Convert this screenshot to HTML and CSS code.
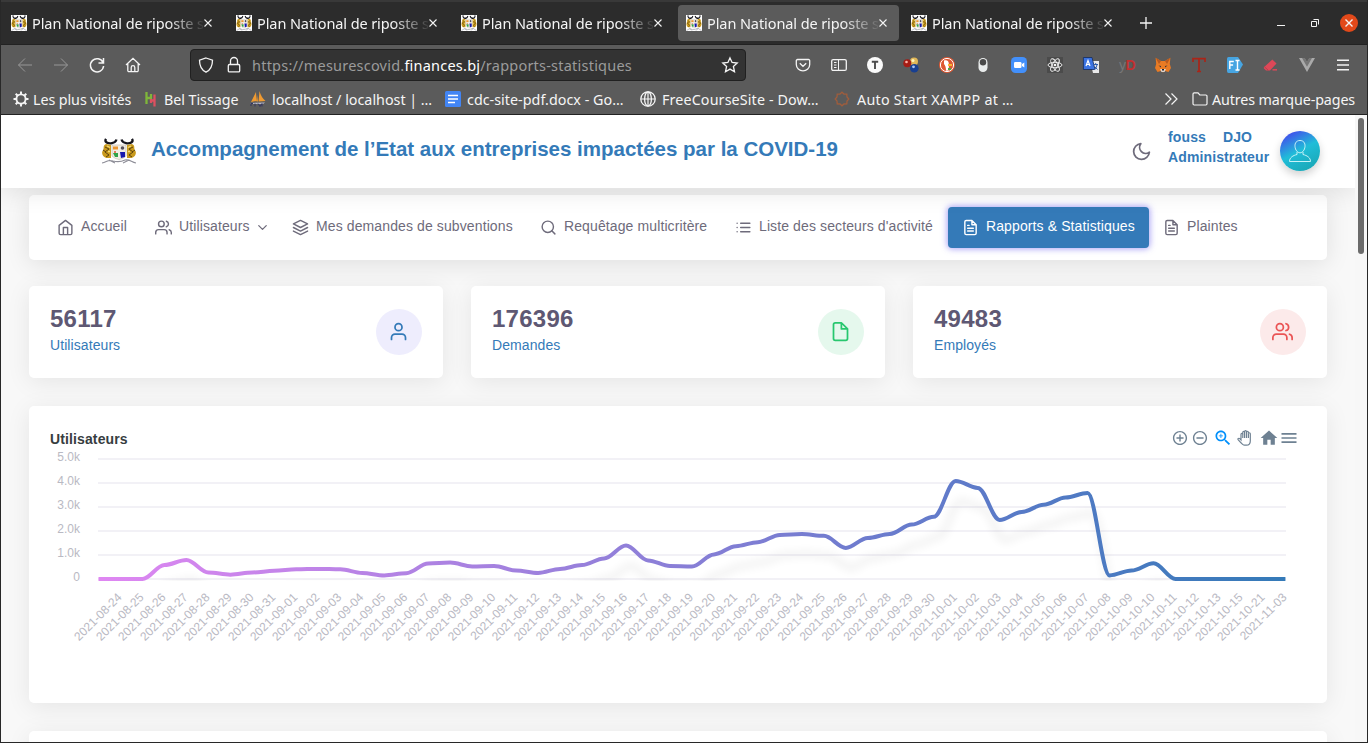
FILE: index.html
```html
<!DOCTYPE html>
<html lang="fr">
<head>
<meta charset="utf-8">
<title>Rapports &amp; Statistiques</title>
<link rel="stylesheet" href="styles.css">
</head>
<body>
<svg class="defs" aria-hidden="true">
  <symbol id="arms" viewBox="0 0 36 26" preserveAspectRatio="none">
    <path d="M5 .8C3 4 7 6 11 5.2C14 4.6 15 3 15.500 1.500M31 .8C33 4 29 6 25 5.200C22 4.600 21 3 20.500 1.500" fill="none" stroke="#15151d" stroke-width="2.300"/>
    <path d="M5 6C1 8 4 10 1.500 13C0 16 3 20 6 20L10 20L10 7ZM31 6C35 8 32 10 34.500 13C36 16 33 20 30 20L26 20L26 7Z" fill="#c99a1d"/>
    <path d="M4 9L8 11L4 14L8 17L5 19M32 9L28 11L32 14L28 17L31 19M2 12l3 2M34 12l-3 2" fill="none" stroke="#5c430f" stroke-width="1"/>
    <path d="M6 8L9 9.500M7 13.500h2M30 8L27 9.500M29 13.500h-2" stroke="#f4dc75" stroke-width="1.300"/>
    <path d="M11 7H25V18Q22 21 18 21.500Q14 21 11 18Z" fill="#f1eee5" stroke="#bdb4a4" stroke-width=".6"/>
    <path d="M12 8.500h5v3h-5z" fill="#eb9632"/><path d="M12 15h5v4h-3z" fill="#30a34a"/><path d="M19 14h5v5l-4 1z" fill="#1719ae"/><circle cx="21.500" cy="10" r="1.800" fill="#55505a"/><circle cx="14" cy="14" r="1" fill="#e15331"/>
    <path d="M1 25C6 24 7 21 12 23C16 24 20 24 24 22C29 21 30 24 35 25M8 22L14 25M28 22L22 25" fill="none" stroke="#8e8e98" stroke-width="1.100"/>
  </symbol>
  <symbol id="close" viewBox="0 0 10 10"><path d="M1.500 1.500l7 7M8.500 1.500l-7 7"/></symbol>
  <symbol id="users" viewBox="0 0 24 24"><path d="M17 21v-2a4 4 0 0 0-4-4H5a4 4 0 0 0-4 4v2M23 21v-2a4 4 0 0 0-3-3.870M16 3.130a4 4 0 0 1 0 7.750"/><circle cx="9" cy="7" r="4"/></symbol>
  <symbol id="filetext" viewBox="0 0 24 24"><path d="M14 2H6a2 2 0 0 0-2 2v16a2 2 0 0 0 2 2h12a2 2 0 0 0 2-2V8zM14 2v6h6M16 13H8M16 17H8M10 9H8"/></symbol>
</svg>
<div class="window">
  <div class="tabbar">
    <div class="tab"><svg class="favicon"><use href="#arms"/></svg><span class="tab-title">Plan National de riposte s</span><svg class="ic tab-close"><use href="#close"/></svg></div>
    <div class="tab"><svg class="favicon"><use href="#arms"/></svg><span class="tab-title">Plan National de riposte s</span><svg class="ic tab-close"><use href="#close"/></svg></div>
    <div class="tab"><svg class="favicon"><use href="#arms"/></svg><span class="tab-title">Plan National de riposte s</span><svg class="ic tab-close"><use href="#close"/></svg></div>
    <div class="tab active"><svg class="favicon"><use href="#arms"/></svg><span class="tab-title">Plan National de riposte s</span><svg class="ic tab-close"><use href="#close"/></svg></div>
    <div class="tab"><svg class="favicon"><use href="#arms"/></svg><span class="tab-title">Plan National de riposte s</span><svg class="ic tab-close"><use href="#close"/></svg></div>
    <svg class="ic newtab" viewBox="0 0 14 14"><path d="M7 1v12M1 7h12"/></svg>
    <div class="winctl">
      <svg class="ic" width="8" height="8" viewBox="0 0 8 8"><path d="M0 6.500h8"/></svg>
      <svg class="ic" width="8" height="8" viewBox="0 0 8 8"><path d="M.5 2.500h5v5h-5zM2.500 .5h5v5" /></svg>
      <svg class="ic" width="18" height="18" viewBox="0 0 18 18"><circle cx="9" cy="9" r="9" fill="#e2491a" stroke="none"/><path d="M5.500 5.500l7 7M12.500 5.500l-7 7" stroke-width="1.400"/></svg>
    </div>
  </div>

  <div class="toolbar">
    <div class="navbtns">
      <svg class="ic dim" viewBox="0 0 16 16"><path d="M15 8H1.500M8 1.500L1.500 8L8 14.500"/></svg>
      <svg class="ic dim" viewBox="0 0 16 16"><path d="M1 8h13.500M8 1.500L14.500 8L8 14.500"/></svg>
      <svg class="ic" viewBox="0 0 16 16"><path d="M14 5.500A6.600 6.600 0 1 0 14.600 9M14.500 1v5h-5" stroke-width="1.500"/></svg>
      <svg class="ic" viewBox="0 0 16 16"><path d="M1 8L8 1.300L15 8M2.800 6.800V13.500a1.200 1.200 0 0 0 1.200 1.200h8a1.200 1.200 0 0 0 1.200-1.200V6.800M6.200 14.500V10.500a1.800 1.800 0 0 1 3.600 0V14.500" stroke-width="1.300"/></svg>
    </div>
    <div class="urlbar">
      <svg class="ic" viewBox="0 0 16 16"><path d="M8 1L14.500 3.200C14.500 9 12.500 13 8 15.200C3.500 13 1.500 9 1.500 3.200Z" stroke-width="1.300"/></svg>
      <svg class="ic" viewBox="0 0 16 16"><path d="M3.500 7.500h9a1.200 1.200 0 0 1 1.200 1.200v5a1.200 1.200 0 0 1-1.200 1.200h-9a1.200 1.200 0 0 1-1.200-1.200v-5a1.200 1.200 0 0 1 1.200-1.200zM4.500 7.500V4a3.500 3.500 0 0 1 7 0V7.500" stroke-width="1.300"/></svg>
      <span class="url">https://mesurescovid.<b>finances.bj</b>/rapports-statistiques</span>
      <svg class="ic star" viewBox="0 0 16 16"><path d="M8 .9L10.100 5.500L15.200 6.100L11.400 9.500L12.500 14.700L8 12.100L3.500 14.700L4.600 9.500L.8 6.100L5.900 5.500Z" stroke-width="1.300"/></svg>
    </div>
    <div class="exts">
      <svg class="ic" viewBox="0 0 16 16"><path d="M2.500 2.500h11a1.200 1.200 0 0 1 1.200 1.200V7.500a6.700 6.300 0 0 1-13.400 0V3.700a1.200 1.200 0 0 1 1.200-1.200zM4.800 6.300L8 9.300L11.200 6.300" stroke-width="1.300"/></svg>
      <svg class="ic" viewBox="0 0 16 16"><rect x=".7" y="2.600" width="14.600" height="10.800" rx="1.500" stroke-width="1.300"/><path d="M7.500 2.600v10.800M3 5.500h2.500M3 8h2.500M3 10.500h2.500"/></svg>
      <svg viewBox="0 0 16 16"><circle cx="8" cy="8" r="8" fill="#fafafa"/><path d="M4.800 4.700h6.400M8 4.700V12" stroke="#4c4c4c" stroke-width="1.900"/></svg>
      <svg viewBox="0 0 16 16"><circle cx="11" cy="4.500" r="4" fill="#e0b758"/><circle cx="10" cy="3.500" r="1.500" fill="#fff3bb"/><circle cx="4.300" cy="6.300" r="4" fill="#a51c15"/><circle cx="3.500" cy="5" r="1.300" fill="#ffb4a8"/><circle cx="11.300" cy="11.300" r="4.300" fill="#183f91"/><circle cx="10.500" cy="9.800" r="1.400" fill="#a8c6f6"/></svg>
      <svg viewBox="0 0 16 16"><circle cx="8" cy="8" r="8" fill="#de5833"/><circle cx="8" cy="8" r="6.600" fill="none" stroke="#fff"/><path d="M5 3.500C8 2.500 10 4 9.800 7L9.800 13.500L7 13.800Q7 9 5 7z" fill="#fff"/><path d="M9 7h4v2H9z" fill="#f8b72f"/><path d="M9 11h3v2H9z" fill="#4ca749"/></svg>
      <svg viewBox="0 0 16 16"><rect x="3.500" y="1" width="9" height="14" rx="4.500" fill="#e9ecec"/><circle cx="8" cy="5.300" r="3.200" fill="#494949"/></svg>
      <svg viewBox="0 0 16 16"><rect width="16" height="16" rx="4.500" fill="#4390fb"/><rect x="3" y="5" width="7.500" height="6" rx="1.300" fill="#fff"/><path d="M11 7l2.300-1.500v5L11 9z" fill="#fff"/></svg>
      <svg viewBox="0 0 16 16"><path fill="#4b4b4b" d="M0 0h16v16H0z"/><g fill="none" stroke="#f5f5f5" stroke-width=".9"><ellipse cx="8" cy="8" rx="7" ry="2.700"/><ellipse cx="8" cy="8" rx="7" ry="2.700" transform="rotate(60 8 8)"/><ellipse cx="8" cy="8" rx="7" ry="2.700" transform="rotate(120 8 8)"/></g><circle cx="8" cy="8" r="1.300" fill="#f5f5f5"/></svg>
      <svg viewBox="0 0 16 16"><path fill="#e9e9ea" d="M7 4h9v12H10z"/><path fill="#3b73e2" stroke="#142b5d" stroke-width=".8" d="M.4.5H9l3 12H.4z"/><path d="M3 9l2-5.500L7 9M3.700 7.500h2.800" stroke="#fff" stroke-width="1.200" fill="none"/><path d="M10.500 7.500h4.500M12.700 6v1.500M14 8q-1 4-3 5M11.500 9.500l3 3" stroke="#2e5dad" fill="none"/></svg>
      <span class="yd">y<b>D</b></span>
      <svg viewBox="0 0 16 16"><path d="M.6.8L6 4h4L15.400.8L14.800 7L16 11L13.500 15L10 14L8 15.500L6 14L2.500 15L0 11L1.200 7z" fill="#e97b24"/><path d="M.6.8L6 4L4 7zM15.400.8L10 4l2 3z" fill="#b75a21"/><path d="M3.500 8.500L6 9v1.500zM12.500 8.500L10 9v1.500z" fill="#33303b"/><path d="M5 12h6l-1.500 3h-3z" fill="#ddd4cc"/><path d="M7 12h2v1.500H7z" fill="#26222a"/></svg>
      <svg viewBox="0 0 16 16"><path d="M2 5V1.700h12V5M8 1.500V14.500M6 14.500h4" fill="none" stroke="#aa2518" stroke-width="1.700"/></svg>
      <svg viewBox="0 0 16 16"><path d="M1.500 0H11L16 7.500L11 16H1.500Q0 16 0 14V2Q0 0 1.500 0z" fill="#47a5e2"/><path d="M2.800 12V4.500h4M2.800 8h3.300M8.500 3.500h4M8.500 13h4M10.500 3.500V13" fill="none" stroke="#fff" stroke-width="1.400"/></svg>
      <svg viewBox="0 0 16 16"><path d="M9.300 2.500L13.500 6.500L7 13.500H3L1 11.500Q.5 11 1 10.300z" fill="#dd4858"/><path d="M1.500 9.800l4 3.700" stroke="#b83f4c"/><path d="M9.500 12.800h4.500" stroke="#dd4858" stroke-width="1.500"/></svg>
      <svg viewBox="0 0 16 16"><path d="M0 1h5.500L8 5.300L10.500 1H16L8 15z" fill="#aaa"/><path d="M3 1h2.800L8 4.800L10.200 1H13L8 9.800z" fill="#777"/></svg>
      <svg class="ic" viewBox="0 0 16 16"><path d="M2 3.200h12M2 8h12M2 12.800h12" stroke-width="1.400"/></svg>
    </div>
  </div>

  <div class="bookmarks">
    <div class="bm"><svg class="ic" viewBox="0 0 16 16"><circle cx="8" cy="8" r="4.600" stroke-width="1.900"/><path d="M8 .5v2.500M8 13v2.500M.5 8H3M13 8h2.500M2.700 2.700l1.800 1.800M11.500 11.500l1.800 1.800M2.700 13.300l1.800-1.800M11.500 4.500l1.800-1.800" stroke-width="2"/></svg><span class="t1">Les plus visités</span></div>
    <div class="bm"><svg viewBox="0 0 16 16"><path d="M3.500 1v12M3.500 7H8M8 3v5" stroke="#7fb63b" stroke-width="2.300" fill="none"/><path d="M7 9.500h4.500M11.500 3.500v12M8 8v4" stroke="#db5160" stroke-width="2.300" fill="none"/></svg><span class="t2">Bel Tissage</span></div>
    <div class="bm"><svg viewBox="0 0 16 16"><path d="M6 1L6.500 10L1 11zM9.500 0Q11 6 15.500 10L8.500 10.500zM7 3.500L8 10.500H6.500z" fill="#ef9a31"/><path d="M0 12l15-.6l-2 1.600H2z" fill="#b8b8c6"/><path d="M1 15v-2.500h2M5 12.500v3M8 12.500l2 3l2-3v3" stroke="#34345f" stroke-width="1" fill="none"/></svg><span class="t3">localhost / localhost | …</span></div>
    <div class="bm"><svg viewBox="0 0 16 16"><rect width="16" height="16" rx="1.500" fill="#4285f4"/><path d="M3 4.500h10M3 8h10M3 11.500h7" stroke="#fff" stroke-width="1.700"/></svg><span class="t4">cdc-site-pdf.docx - Go…</span></div>
    <div class="bm"><svg class="ic" viewBox="0 0 16 16"><circle cx="8" cy="8" r="7.200" stroke-width="1.300"/><ellipse cx="8" cy="8" rx="3.400" ry="7.200" stroke-width="1.300"/><path d="M1 8h14M8 1v14" stroke-width="1.200"/></svg><span class="t5">FreeCourseSite - Dow…</span></div>
    <div class="bm"><svg viewBox="0 0 16 16"><path d="M8 1.200L10 3L12.800 3.200L13 6L14.800 8L13 10L12.800 12.800L10 13L8 14.800L6 13L3.200 12.800L3 10L1.200 8L3 6L3.200 3.200L6 3z" fill="none" stroke="#a05d3c" stroke-width="1.300"/></svg><span class="t6">Auto Start XAMPP at …</span></div>
    <svg class="ic more" viewBox="0 0 14 14"><path d="M1.500 1.500L7 7L1.500 12.500M7.500 1.500L13 7L7.500 12.500" stroke-width="1.200"/></svg>
    <div class="bm"><svg class="ic" viewBox="0 0 16 16"><path d="M1 3a1.200 1.200 0 0 1 1.200-1.200H6L7.800 4H13.800A1.200 1.200 0 0 1 15 5.200V12.800A1.200 1.200 0 0 1 13.800 14H2.200A1.200 1.200 0 0 1 1 12.800z" stroke-width="1.200"/></svg><span class="t7">Autres marque-pages</span></div>
  </div>

  <div class="viewport">
    <div class="page">
      <header class="header">
        <svg class="logo"><use href="#arms"/></svg>
        <h1 class="brand">Accompagnement de l’Etat aux entreprises impactées par la COVID-19</h1>
        <svg class="ft moon" viewBox="0 0 24 24"><path d="M21 12.790A9 9 0 1 1 11.210 3 7 7 0 0 0 21 12.790z"/></svg>
        <div class="who"><span class="names"><span>fouss</span><span>DJO</span></span><span class="role">Administrateur</span></div>
        <svg class="avatar" viewBox="0 0 40 40"><defs><linearGradient id="av" x1=".2" y1="0" x2=".75" y2="1"><stop offset="0" stop-color="#4444ee"/><stop offset=".5" stop-color="#20bdd8"/><stop offset="1" stop-color="#1aa7b5"/></linearGradient></defs><circle cx="20" cy="20" r="20" fill="url(#av)"/><path d="M20 9.500c3.500 0 5.300 2.500 5 6c-.3 3.500-2.500 6.300-5 6.300s-4.700-2.800-5-6.300c-.3-3.500 1.500-6 5-6zM17 21v2.500c-4 1-7.500 3-7.500 7h21c0-4-3.500-6-7.500-7V21" fill="none" stroke="#c9f3f8" stroke-width="1"/></svg>
      </header>

      <nav class="menu">
        <a class="m1"><svg class="ft" viewBox="0 0 24 24"><path d="M3 9l9-7 9 7v11a2 2 0 0 1-2 2H5a2 2 0 0 1-2-2zM9 22V12h6v10"/></svg>Accueil</a>
        <a class="m2"><svg class="ft"><use href="#users"/></svg>Utilisateurs<svg class="ft chev" viewBox="0 0 24 24"><path d="M6 9l6 6 6-6"/></svg></a>
        <a class="m3"><svg class="ft" viewBox="0 0 24 24"><path d="M12 2L2 7l10 5 10-5-10-5zM2 17l10 5 10-5M2 12l10 5 10-5"/></svg>Mes demandes de subventions</a>
        <a class="m4"><svg class="ft" viewBox="0 0 24 24"><circle cx="11" cy="11" r="8"/><path d="M21 21l-4.350-4.350"/></svg>Requêtage multicritère</a>
        <a class="m5"><svg class="ft" viewBox="0 0 24 24"><path d="M8 6h13M8 12h13M8 18h13M3 6h.01M3 12h.01M3 18h.01"/></svg>Liste des secteurs d'activité</a>
        <a class="m6"><svg class="ft"><use href="#filetext"/></svg>Rapports &amp; Statistiques</a>
        <a class="m7"><svg class="ft"><use href="#filetext"/></svg>Plaintes</a>
      </nav>

      <section class="stats">
        <article class="card stat"><div><h2>56117</h2><p>Utilisateurs</p></div><span class="disc blue"><svg class="ft" viewBox="0 0 24 24"><path d="M20 21v-2a4 4 0 0 0-4-4H8a4 4 0 0 0-4 4v2"/><circle cx="12" cy="7" r="4"/></svg></span></article>
        <article class="card stat"><div><h2>176396</h2><p>Demandes</p></div><span class="disc green"><svg class="ft" viewBox="0 0 24 24"><path d="M13 2H6a2 2 0 0 0-2 2v16a2 2 0 0 0 2 2h12a2 2 0 0 0 2-2V9zM13 2v7h7"/></svg></span></article>
        <article class="card stat"><div><h2>49483</h2><p>Employés</p></div><span class="disc red"><svg class="ft"><use href="#users"/></svg></span></article>
      </section>

      <section class="card chart">
        <div class="chart-head">
          <h3>Utilisateurs</h3>
          <div class="tools">
            <svg width="20" height="20" viewBox="0 0 24 24"><path d="M13 7h-2v4H7v2h4v4h2v-4h4v-2h-4V7zm-1-5C6.480 2 2 6.480 2 12s4.480 10 10 10 10-4.480 10-10S17.520 2 12 2zm0 18c-4.410 0-8-3.590-8-8s3.590-8 8-8 8 3.590 8 8-3.590 8-8 8z" transform="translate(1.800 1.800) scale(.85)"/></svg>
            <svg width="20" height="20" viewBox="0 0 24 24"><path d="M7 11v2h10v-2H7zm5-9C6.480 2 2 6.480 2 12s4.480 10 10 10 10-4.480 10-10S17.520 2 12 2zm0 18c-4.410 0-8-3.590-8-8s3.590-8 8-8 8 3.590 8 8-3.590 8-8 8z" transform="translate(1.800 1.800) scale(.85)"/></svg>
            <svg class="on" width="20" height="20" viewBox="0 0 24 24"><path d="M15.500 14h-.79l-.28-.27C15.410 12.590 16 11.110 16 9.500 16 5.910 13.090 3 9.500 3S3 5.910 3 9.500 5.910 16 9.500 16c1.610 0 3.090-.59 4.230-1.570l.27.28v.79l5 4.990L20.490 19l-4.990-5zm-6 0C7.010 14 5 11.990 5 9.500S7.010 5 9.500 5 14 7.010 14 9.500 11.990 14 9.500 14zM12 10h-2v2H9v-2H7V9h2V7h1v2h2v1z"/></svg>
            <svg class="hand" width="16" height="16" viewBox="0 0 16 16"><path d="M4 10V4.200a.9.900 0 0 1 1.800 0V2.200a.9.900 0 0 1 1.800 0V1.600a.9.900 0 0 1 1.900 0v.6a.9.900 0 0 1 1.900 0v1.500a.9.900 0 0 1 1.900 0V11c0 2.500-1.300 4.200-3.800 4.200H7.500c-2 0-4-3-6.400-5.600c-.7-1 .8-1.800 1.700-1z"/><path d="M5.800 4v4M7.600 2v6M9.500 2v6M11.400 3.500V8"/></svg>
            <svg width="20" height="20" viewBox="0 0 24 24"><path d="M10 20v-6h4v6h5v-8h3L12 3 2 12h3v8z"/></svg>
            <svg width="20" height="20" viewBox="0 0 24 24"><path d="M3 18h18v-2H3v2zm0-5h18v-2H3v2zm0-7v2h18V6H3z"/></svg>
          </div>
        </div>
        <svg id="plot" class="plot" width="1256" height="200" viewBox="50 450 1256 200">
          <defs>
            <linearGradient id="ln" gradientUnits="userSpaceOnUse" x1="99" y1="0" x2="1286" y2="0"><stop offset="0" stop-color="#df87f2"/><stop offset=".75" stop-color="#5b7ac8"/><stop offset="1" stop-color="#347ab8"/></linearGradient>
            <clipPath id="cl"><rect x="98" y="450" width="1188" height="131"/></clipPath>
            <filter id="bl" x="-5%" y="-20%" width="110%" height="150%"><feGaussianBlur stdDeviation="5"/></filter>
          </defs>
        </svg>
      </section>
      <section class="card next"></section>
    </div>
    <div class="scroll"><div class="thumb"></div></div>
  </div>
</div>
<script src="chart.js"></script>
</body>
</html>
```

FILE: styles.css
```css
* { box-sizing: border-box; }
body { margin: 0; font-family: "Liberation Sans", Arial, sans-serif; font-size: 14px; }
svg { display: block; flex: none; overflow: visible; }
h1, h2, h3, p { margin: 0; }
.defs { position: absolute; width: 0; height: 0; }
.window { width: 1368px; height: 743px; overflow: hidden; display: flex; flex-direction: column; border: 1px solid #282828; border-top: 0; background: #5b5b5b; }
.ic { fill: none; stroke: #f4f4f4; stroke-width: 1; }
.ft { width: 17px; height: 17px; fill: none; stroke: currentColor; stroke-width: 2; stroke-linecap: round; stroke-linejoin: round; }

/* browser chrome */
.tabbar, .toolbar, .bookmarks { font-family: "Noto Sans", "Open Sans", sans-serif; color: #f5f5f5; }
.tabbar { height: 45px; flex: none; display: flex; align-items: center; background: #2c2c2c; border-top: 2px solid #393939; border-bottom: 1px solid #222; }
.tab { width: 221px; height: 36px; margin-right: 4px; padding-left: 8px; display: flex; align-items: center; border-radius: 4px; }
.tab:first-child { margin-left: 2px; }
.tab.active { background: #5b5b5b; }
.favicon { width: 16px; height: 16px; background: #fff; }
.tab-title { width: 177px; flex: none; margin-left: 5px; white-space: nowrap; font-size: 14.500px; letter-spacing: -.09px; -webkit-mask-image: linear-gradient(90deg, #000 135px, transparent 174px); mask-image: linear-gradient(90deg, #000 135px, transparent 174px); }
.tab-close { width: 10px; height: 10px; margin-left: -6px; stroke-width: 1.100; }
.newtab { width: 14px; height: 14px; margin-left: 11px; stroke-width: 1.300; }
.winctl { margin-left: auto; padding-right: 9px; display: flex; align-items: center; gap: 26px; }
.winctl svg:last-child { margin-left: -5px; }
.toolbar { height: 39px; flex: none; display: flex; align-items: center; padding-top: 1px; }
.navbtns { width: 189px; padding-left: 16px; display: flex; gap: 20px; }
.navbtns svg, .urlbar svg, .exts svg { width: 16px; height: 16px; }
.dim { stroke: #989898; }
.urlbar { width: 556px; height: 32px; padding: 0 7px 0 7px; display: flex; align-items: center; gap: 12px; background: #333; border: 1px solid #202020; border-radius: 4px; }
.url { margin-left: -2px; font-size: 14.500px; letter-spacing: .22px; color: #9b9b9b; white-space: nowrap; }
.url b { font-weight: 400; color: #fff; }
.star { margin-left: auto; }
.exts { margin-left: 49px; display: flex; gap: 20px; align-items: center; }
.yd { width: 16px; font: 14px/16px "Liberation Sans", sans-serif; color: #777; white-space: nowrap; letter-spacing: -.5px; }
.yd b { color: #c23030; }
.bookmarks { height: 31px; flex: none; display: grid; grid-template-columns: 130px 107px 195px 195px 194px 330px 28px auto; align-items: center; padding: 0 0 0 12px; border-bottom: 1px solid #222; font-size: 14.300px; }
.bm { display: flex; align-items: center; gap: 5px; white-space: nowrap; }
.bm svg { width: 16px; height: 16px; }
.t1 { letter-spacing: -.08px; margin-left: -1px; }
.t2 { letter-spacing: -.05px; }
.t3 { letter-spacing: 0; margin-left: 1px; }
.t4 { letter-spacing: .03px; margin-left: 1px; }
.t5 { letter-spacing: .13px; margin-left: 1px; }
.t6 { letter-spacing: .27px; margin-left: 2px; }
.t7 { letter-spacing: -.11px; margin-left: -1px; }
.more { width: 14px; height: 14px; }

/* page */
.viewport { flex: 1; min-height: 0; display: flex; background: #f8f8f8; overflow: hidden; }
.page { width: 1354px; flex: none; display: flex; flex-direction: column; }
.scroll { width: 12px; padding: 3px 3px 0; background: #f7f7f7; z-index: 2; }
.thumb { width: 6px; height: 136px; border-radius: 3px; background: #6b6b6b; }
.header { height: 73px; flex: none; display: flex; align-items: flex-start; background: #fff; box-shadow: 0 4px 24px rgba(0, 0, 0, .1); z-index: 1; position: relative; color: #347ab8; }
.logo { width: 36px; height: 26px; margin: 23px 0 0 100px; }
.brand { margin: 21px 0 0 14px; font-size: 20.500px; line-height: 26px; font-weight: 700; white-space: nowrap; }
.moon { width: 21px; height: 21px; margin: 26px 16px 0 auto; color: #6e6b7b; }
.who { width: 112px; margin-top: 12px; font-size: 14px; letter-spacing: .12px; font-weight: 700; line-height: 20px; display: flex; flex-direction: column; }
.names { display: flex; gap: 17px; }
.avatar { width: 40px; height: 40px; margin: 16px 35px 0 0; border-radius: 50%; box-shadow: 0 4px 8px rgba(0, 0, 0, .18); }
.menu { height: 65px; margin: 7px 28px 0; flex: none; display: flex; align-items: center; background: #fff; border-radius: 5px; box-shadow: 0 4px 24px rgba(0, 0, 0, .1); color: #6e6b7b; letter-spacing: .11px; }
.menu a { height: 41px; display: flex; align-items: center; gap: 7px; padding-bottom: 4px; white-space: nowrap; }
.menu .ft { position: relative; top: 2px; }
.m1 { width: 98px; margin-left: 28px; }
.m2 { width: 137px; }
.m3 { width: 248px; }
.m4 { width: 195px; }
.m5 { width: 213px; }
.menu .m6 { width: 201px; padding-left: 14px; margin-right: 14px; border-radius: 4px; background: #347ab8; color: #fff; box-shadow: 0 0 6px 1px rgba(115, 103, 240, .6); }
.menu .chev { width: 15px; height: 15px; margin-left: -2px; }
.card { background: #fff; border-radius: 5px; box-shadow: 0 4px 24px rgba(0, 0, 0, .08); }
.stats { margin: 26px 28px 0; flex: none; display: grid; grid-template-columns: repeat(3, 1fr); gap: 28px; }
.stat { height: 92px; padding: 0 21px; display: flex; align-items: center; justify-content: space-between; }
.stat h2 { color: #5e5873; font-size: 24px; line-height: 28px; margin-top: -4px; letter-spacing: .25px; }
.stat p { color: #347ab8; line-height: 21px; margin-top: 2px; letter-spacing: .08px; }
.disc { width: 46px; height: 46px; padding: 0 1px 1px 0; border-radius: 50%; display: flex; align-items: center; justify-content: center; }
.disc .ft { width: 21px; height: 21px; }
.blue { background: #eeedfd; color: #347ab8; }
.green { background: #e5f8ed; color: #28c76f; }
.red { background: #fceaea; color: #ea5455; }
.chart { height: 297px; margin: 28px 28px 0; padding: 21px 21px 0; flex: none; }
.chart-head { height: 23px; display: flex; justify-content: space-between; align-items: center; }
.chart h3 { font-size: 14px; color: #373d3f; letter-spacing: .12px; }
.tools { display: flex; align-items: center; padding: 0 7px 1px 0; fill: #6e8192; }
.tools .on { fill: #008ffb; margin-left: 3px; }
.tools .hand { margin: 0 6px 0 4px; fill: none; stroke: #6e8192; stroke-width: 1.200; }
.plot text { font-size: 12px; fill: #b9b9c3; }
.grid-line { stroke: #f2f1f6; stroke-width: 2; }
.line { fill: none; stroke: url(#ln); stroke-width: 4; }
.line-shadow { fill: none; stroke: #000; stroke-width: 4; opacity: .09; filter: url(#bl); }
.next { height: 60px; margin: 28px 28px 0; flex: none; }
```

FILE: chart.js
```js
const NS = 'http://www.w3.org/2000/svg';
const plot = document.getElementById('plot');
const add = (tag, attrs, text, parent) => {
  const el = document.createElementNS(NS, tag);
  for (const k in attrs) el.setAttribute(k, attrs[k]);
  if (text) el.textContent = text;
  (parent || plot).appendChild(el);
  return el;
};

const X0 = 98.5, STEP = 21.98, BASE = 579, UNIT = 24.1;

['0', '1.0k', '2.0k', '3.0k', '4.0k', '5.0k'].forEach((label, i) => {
  const y = BASE - i * UNIT;
  add('line', { x1: 98, x2: 1286, y1: Math.round(y), y2: Math.round(y), class: 'grid-line' });
  add('text', { x: 80, y: y + 2.3, 'text-anchor': 'end' }, label);
});

// daily sign-ups, in thousands
const values = [0, 0, 0, .58, .79, .27, .18, .27, .34, .40, .42, .40, .25, .15, .24, .64, .68, .52, .54, .35,
  .25, .42, .58, .85, 1.39, .77, .54, .52, 1.02, 1.36, 1.53, 1.83, 1.87, 1.79, 1.29, 1.70, 1.87, 2.26, 2.58,
  4.07, 3.78, 2.45, 2.78, 3.08, 3.38, 3.57, .15, .35, .65, 0, 0, 0, 0, 0, 0];

let d = '';
values.forEach((v, i) => {
  const x = X0 + i * STEP, y = BASE - v * UNIT;
  if (!i) { d = `M${x} ${y}`; return; }
  const px = x - STEP, py = BASE - values[i - 1] * UNIT, c = STEP * .35;
  d += `C${px + c} ${py} ${x - c} ${y} ${x} ${y}`;
});
const g = add('g', { 'clip-path': 'url(#cl)' });
add('path', { d, class: 'line-shadow', transform: 'translate(5 20)' }, null, g);
add('path', { d, class: 'line' }, null, g);

const dates = [];
const pad = n => String(n).padStart(2, '0');
for (let i = 24; i <= 31; i++) dates.push('2021-08-' + i);
for (let i = 1; i <= 30; i++) dates.push('2021-09-' + pad(i));
for (let i = 1; i <= 13; i++) dates.push('2021-10-' + pad(i));
dates.push('2021-10-15', '2021-10-21', '2021-11-03');
dates.forEach((t, i) => {
  const x = X0 + (i + 1) * STEP + 2;
  add('text', { x, y: 598, 'text-anchor': 'end', transform: `rotate(-45 ${x} 598)` }, t);
});
```
